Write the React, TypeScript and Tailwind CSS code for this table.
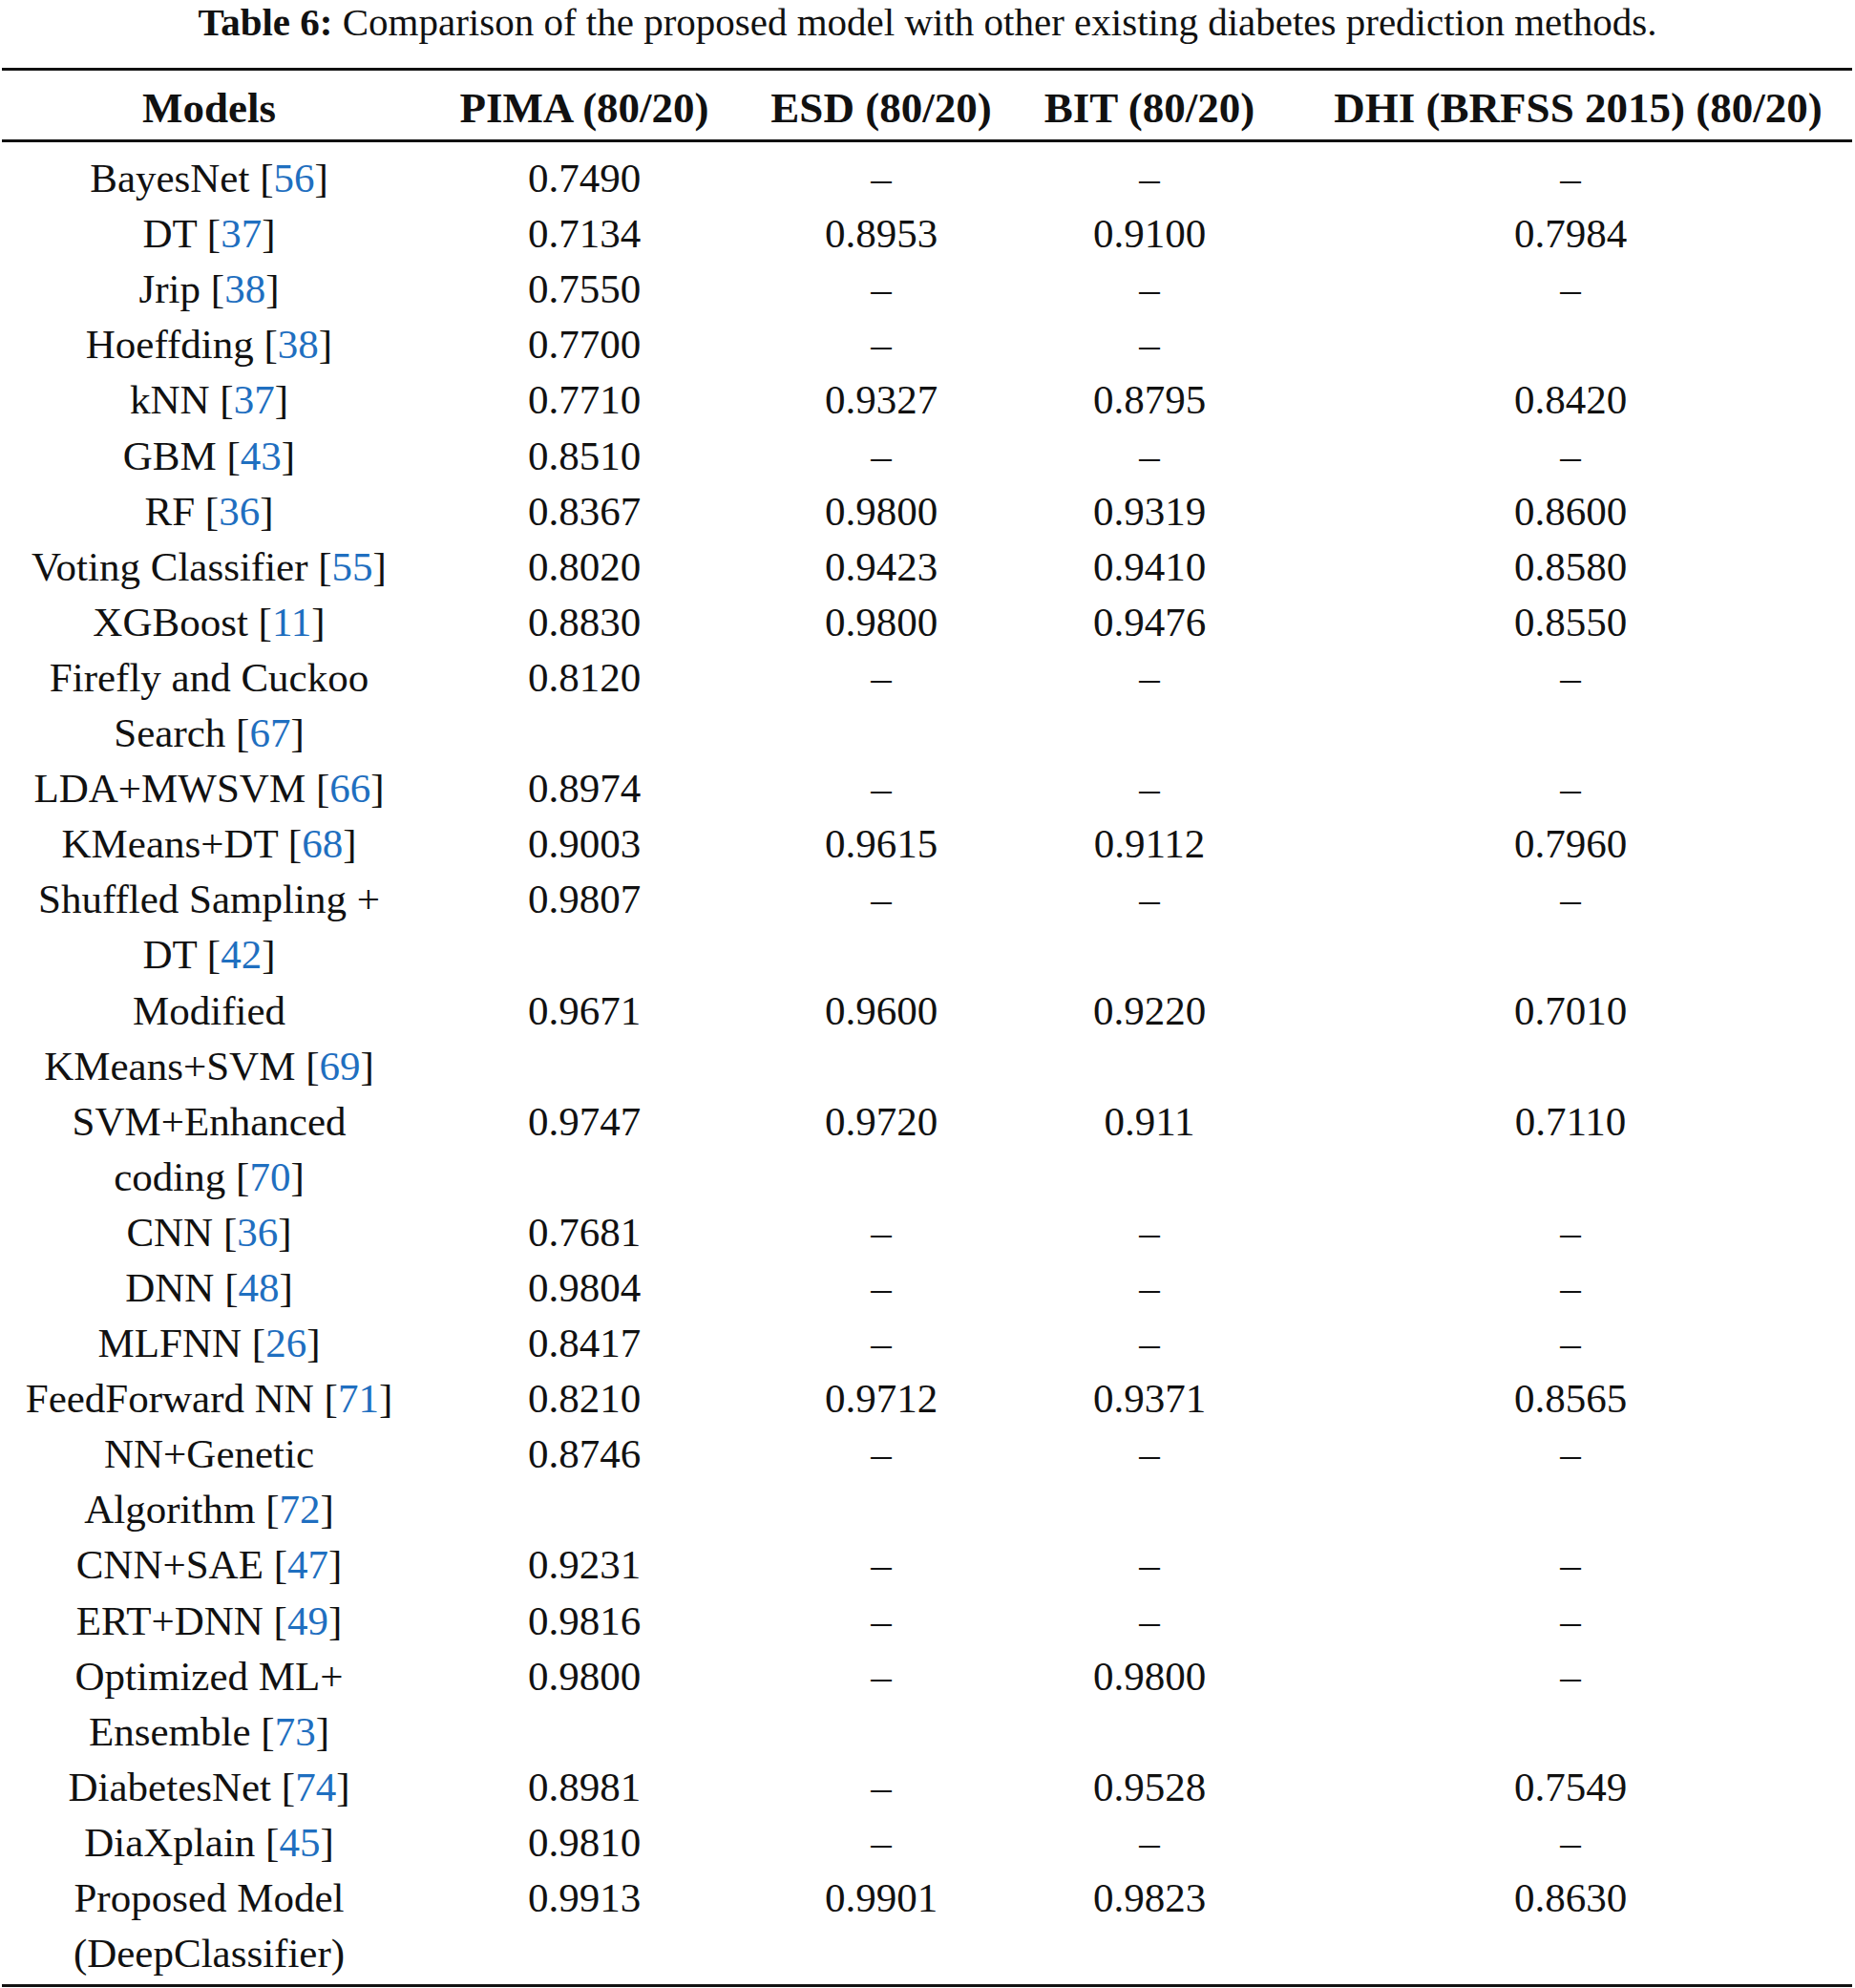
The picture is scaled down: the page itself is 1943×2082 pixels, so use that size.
type Row = {
  model: string[];
  cite: string;
  pima: string;
  esd: string;
  bit: string;
  dhi: string;
};

const rows: Row[] = [
  { model: ["BayesNet"], cite: "56", pima: "0.7490", esd: "–", bit: "–", dhi: "–" },
  { model: ["DT"], cite: "37", pima: "0.7134", esd: "0.8953", bit: "0.9100", dhi: "0.7984" },
  { model: ["Jrip"], cite: "38", pima: "0.7550", esd: "–", bit: "–", dhi: "–" },
  { model: ["Hoeffding"], cite: "38", pima: "0.7700", esd: "–", bit: "–", dhi: "" },
  { model: ["kNN"], cite: "37", pima: "0.7710", esd: "0.9327", bit: "0.8795", dhi: "0.8420" },
  { model: ["GBM"], cite: "43", pima: "0.8510", esd: "–", bit: "–", dhi: "–" },
  { model: ["RF"], cite: "36", pima: "0.8367", esd: "0.9800", bit: "0.9319", dhi: "0.8600" },
  { model: ["Voting Classifier"], cite: "55", pima: "0.8020", esd: "0.9423", bit: "0.9410", dhi: "0.8580" },
  { model: ["XGBoost"], cite: "11", pima: "0.8830", esd: "0.9800", bit: "0.9476", dhi: "0.8550" },
  { model: ["Firefly and Cuckoo", "Search"], cite: "67", pima: "0.8120", esd: "–", bit: "–", dhi: "–" },
  { model: ["LDA+MWSVM"], cite: "66", pima: "0.8974", esd: "–", bit: "–", dhi: "–" },
  { model: ["KMeans+DT"], cite: "68", pima: "0.9003", esd: "0.9615", bit: "0.9112", dhi: "0.7960" },
  { model: ["Shuffled Sampling +", "DT"], cite: "42", pima: "0.9807", esd: "–", bit: "–", dhi: "–" },
  { model: ["Modified", "KMeans+SVM"], cite: "69", pima: "0.9671", esd: "0.9600", bit: "0.9220", dhi: "0.7010" },
  { model: ["SVM+Enhanced", "coding"], cite: "70", pima: "0.9747", esd: "0.9720", bit: "0.911", dhi: "0.7110" },
  { model: ["CNN"], cite: "36", pima: "0.7681", esd: "–", bit: "–", dhi: "–" },
  { model: ["DNN"], cite: "48", pima: "0.9804", esd: "–", bit: "–", dhi: "–" },
  { model: ["MLFNN"], cite: "26", pima: "0.8417", esd: "–", bit: "–", dhi: "–" },
  { model: ["FeedForward NN"], cite: "71", pima: "0.8210", esd: "0.9712", bit: "0.9371", dhi: "0.8565" },
  { model: ["NN+Genetic", "Algorithm"], cite: "72", pima: "0.8746", esd: "–", bit: "–", dhi: "–" },
  { model: ["CNN+SAE"], cite: "47", pima: "0.9231", esd: "–", bit: "–", dhi: "–" },
  { model: ["ERT+DNN"], cite: "49", pima: "0.9816", esd: "–", bit: "–", dhi: "–" },
  { model: ["Optimized ML+", "Ensemble"], cite: "73", pima: "0.9800", esd: "–", bit: "0.9800", dhi: "–" },
  { model: ["DiabetesNet"], cite: "74", pima: "0.8981", esd: "–", bit: "0.9528", dhi: "0.7549" },
  { model: ["DiaXplain"], cite: "45", pima: "0.9810", esd: "–", bit: "–", dhi: "–" },
  { model: ["Proposed Model", "(DeepClassifier)"], cite: "", pima: "0.9913", esd: "0.9901", bit: "0.9823", dhi: "0.8630" },
];

function ModelCell({ row }: { row: Row }) {
  const last = row.model.length - 1;
  return (
    <>
      {row.model.map((line, i) => (
        <div key={i} className="whitespace-nowrap">
          {line}
          {i === last && row.cite && (
            <>
              {" "}[<span className="text-[#1f6fc0]">{row.cite}</span>]
            </>
          )}
        </div>
      ))}
    </>
  );
}

export default function App() {
  return (
    <div className="w-[1943px] bg-white pb-[2px] font-['Liberation_Serif','Times_New_Roman',serif] text-[#111]">
      <p className="text-center font-['Liberation_Serif','Times_New_Roman',serif] text-[41px] leading-[46px] whitespace-nowrap">
        <span className="font-bold">Table 6:</span> Comparison of the proposed model with other existing
        diabetes prediction methods.
      </p>

      <table className="ml-[2px] mt-[25px] w-[1938px] table-fixed border-collapse font-['Liberation_Serif','Times_New_Roman',serif] text-[43px] leading-[58.1px] text-[#111]">
        <colgroup>
          <col className="w-[434px]" />
          <col className="w-[352px]" />
          <col className="w-[270px]" />
          <col className="w-[292px]" />
          <col className="w-[590px]" />
        </colgroup>
        <thead>
          <tr className="border-y-[3px] border-[#111] text-[45px]">
            <th className="pt-[10px] pb-[4px] text-center font-bold">Models</th>
            <th className="pt-[10px] pb-[4px] text-center font-bold">PIMA (80/20)</th>
            <th className="pt-[10px] pb-[4px] text-center font-bold">ESD (80/20)</th>
            <th className="pt-[10px] pb-[4px] text-center font-bold">BIT (80/20)</th>
            <th className="pt-[10px] pb-[4px] pl-[16px] text-center font-bold whitespace-nowrap">
              DHI (BRFSS 2015) (80/20)
            </th>
          </tr>
        </thead>
        <tbody className="border-b-[3px] border-[#111]">
          {rows.map((row, i) => (
            <tr key={i} className="align-top">
              <td
                className={`text-center ${i === 0 ? "pt-[9px]" : ""} ${
                  i === rows.length - 1 ? "pb-[3px]" : ""
                }`}
              >
                <ModelCell row={row} />
              </td>
              <td className={`text-center ${i === 0 ? "pt-[9px]" : ""}`}>{row.pima}</td>
              <td className={`text-center ${i === 0 ? "pt-[9px]" : ""}`}>{row.esd}</td>
              <td className={`text-center ${i === 0 ? "pt-[9px]" : ""}`}>{row.bit}</td>
              <td className={`text-center ${i === 0 ? "pt-[9px]" : ""}`}>{row.dhi}</td>
            </tr>
          ))}
        </tbody>
      </table>
    </div>
  );
}
